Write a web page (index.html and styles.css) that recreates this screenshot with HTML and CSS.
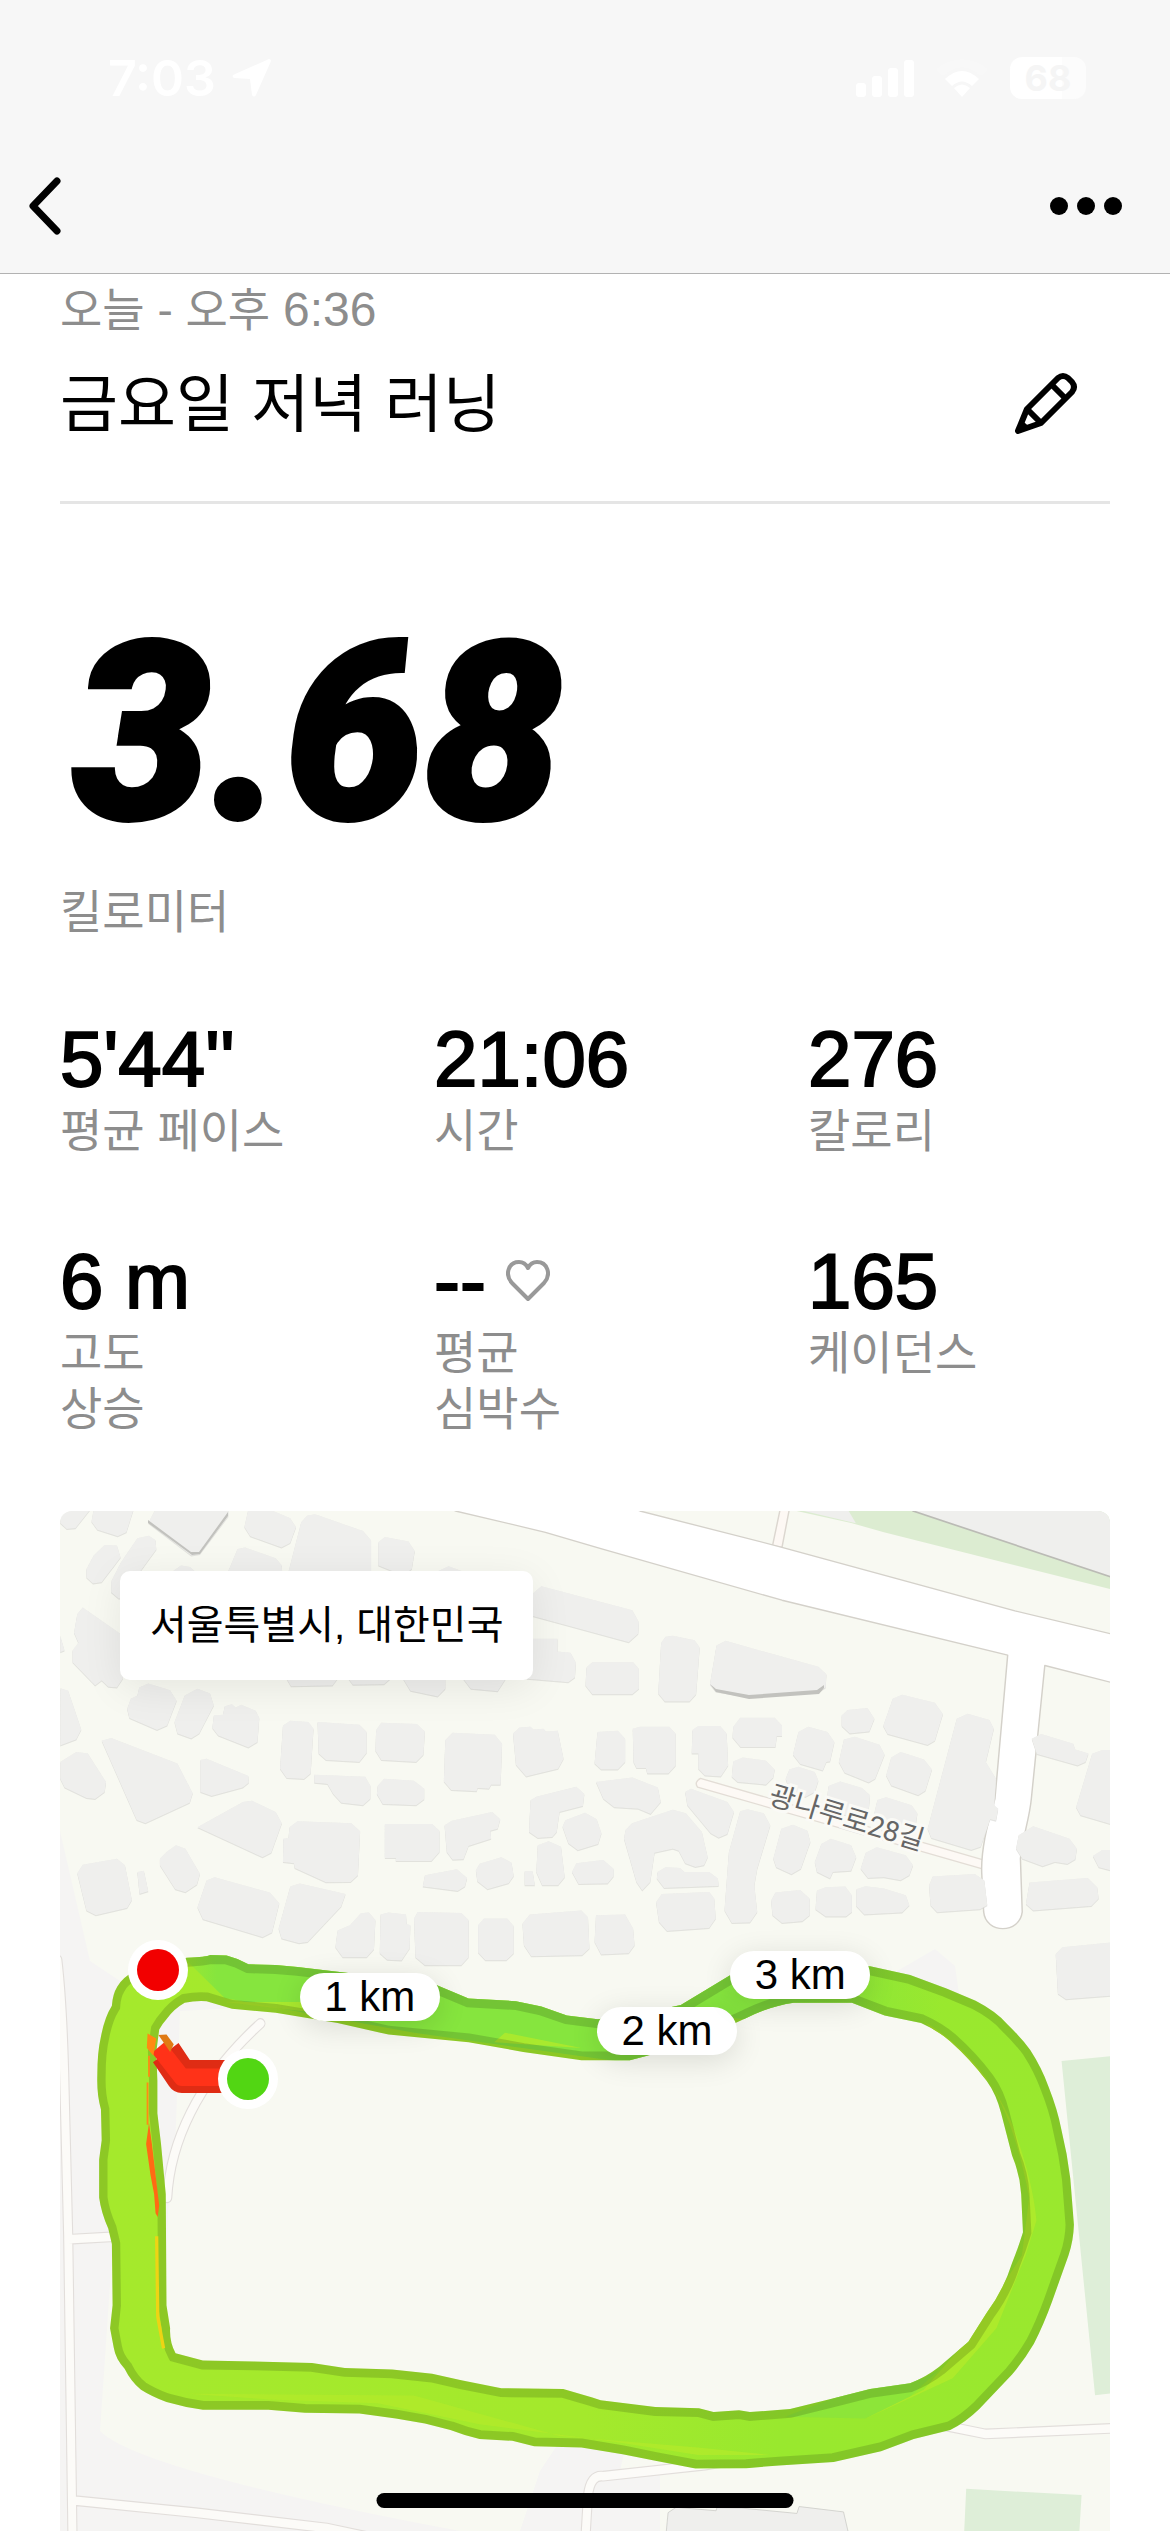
FILE: index.html
```html
<!DOCTYPE html>
<html lang="ko">
<head>
<meta charset="utf-8">
<meta name="viewport" content="width=device-width, initial-scale=1">
<title>금요일 저녁 러닝</title>
<link rel="stylesheet" href="styles.css">
</head>
<body>
<header class="topbar">
  <div class="status">
    <div class="status-left">
      <span class="clock">7:03</span>
      <svg class="location-arrow" viewBox="0 0 40 40" aria-hidden="true"><path d="M37 1 1 17Q0 19 2 20L18 21 20 37Q22 40 24 37L39 3Q39 1 37 1Z"/></svg>
    </div>
    <div class="status-right">
      <svg class="signal" viewBox="0 0 58 38" aria-hidden="true"><rect x="0" y="24" width="10" height="14" rx="3"/><rect x="16" y="17" width="10" height="21" rx="3"/><rect x="32" y="9" width="10" height="29" rx="3"/><rect x="48" y="1" width="10" height="37" rx="3"/></svg>
      <svg class="wifi" viewBox="0 0 52 38" aria-hidden="true"><path opacity=".15" d="M0 10Q26-10 52 10L45 17Q26 0 7 17Z"/><path d="M9 20Q26 4 43 20L36 27Q26 18 16 27Z"/><path d="M18 29Q26 22 34 29L26 38Z"/></svg>
      <span class="battery">68</span>
    </div>
  </div>
  <nav class="nav">
    <button class="icon-button" type="button" aria-label="뒤로"><svg width="36" height="64" viewBox="0 0 36 64" fill="none" stroke="#000" stroke-width="7" stroke-linecap="round" stroke-linejoin="round"><path d="M32 7 8 32l24 25"/></svg></button>
    <button class="icon-button" type="button" aria-label="더 보기"><svg width="74" height="20" viewBox="0 0 74 20"><circle cx="10" cy="10" r="9"/><circle cx="37" cy="10" r="9"/><circle cx="64" cy="10" r="9"/></svg></button>
  </nav>
</header>

<main class="content">
  <p class="date">오늘 - 오후 <time>6:36</time></p>
  <div class="title-row">
    <h1 class="title">금요일 저녁 러닝</h1>
    <button class="icon-button" type="button" aria-label="이름 편집"><svg width="64" height="64" viewBox="0 0 64 64" fill="none" stroke="#000" stroke-width="6" stroke-linejoin="round"><path d="M4 59 13 37 44 6Q49 2 54 6L58 10Q62 15 58 20L27 51Z"/><path d="M37 12 53 28M13 37 27 51M4 59l7-8"/></svg></button>
  </div>

  <p class="distance">3.68</p>
  <p class="label">킬로미터</p>

  <dl class="stats">
    <div class="stat"><dd class="value">5'44''</dd><dt class="label">평균 페이스</dt></div>
    <div class="stat"><dd class="value">21:06</dd><dt class="label">시간</dt></div>
    <div class="stat"><dd class="value">276</dd><dt class="label">칼로리</dt></div>
    <div class="stat"><dd class="value">6 m</dd><dt class="label">고도<br>상승</dt></div>
    <div class="stat"><dd class="value">--<svg class="heart" viewBox="0 0 44 42" aria-hidden="true"><path d="M22 39 6 23C-2 14 3 2 13 2 18 2 21 6 22 8 23 6 26 2 31 2 41 2 46 14 38 23Z"/></svg></dd><dt class="label">평균<br>심박수</dt></div>
    <div class="stat"><dd class="value">165</dd><dt class="label">케이던스</dt></div>
  </dl>

  <section class="map" aria-label="러닝 경로">
    <svg class="map-canvas" viewBox="0 0 1050 1020" aria-hidden="true">
      <defs>
        <linearGradient id="pace" x1="0" x2="1" y1="0" y2="0"><stop offset="0" stop-color="#a5e92c"/><stop offset=".5" stop-color="#a4e92c"/><stop offset=".7" stop-color="#99e82e"/><stop offset="1" stop-color="#9ae82e"/></linearGradient>
        <linearGradient id="fast" x1="0" x2="1" y1="0" y2="0"><stop offset="0" stop-color="#86e53e" stop-opacity="0"/><stop offset=".06" stop-color="#86e53e"/><stop offset=".8" stop-color="#86e53e"/><stop offset="1" stop-color="#86e53e" stop-opacity="0"/></linearGradient>
        <path id="track" d="M300 105 375 75 Q430 73 440 68L485 69 515 78 545 92 620 94 680 99 825 115 940 130 1060 145 1150 181 1280 188 1350 202 1420 225 1505 235 1600 222 1698 205 1733 198 1873 118 2000 95 2253 97 2363 120 2463 155 2543 187Q2600 215 2630 248 2670 285 2693 315 2725 362 2743 410 2768 470 2778 520 2795 585 2803 650L2813 770Q2812 810 2798 850L2753 970Q2730 1030 2703 1080 2675 1125 2643 1160L2553 1250Q2515 1285 2473 1305L2373 1328 2283 1360 2153 1388 2003 1397 1913 1404 1773 1405 1663 1385 1573 1368 1460 1350 1330 1347 1270 1333 1180 1328Q1140 1320 1100 1305L1030 1288 950 1275 850 1262 700 1260 600 1252H420Q370 1246 320 1232 280 1218 250 1200 222 1178 205 1145 180 1120 175 1090L165 1040 172 980 170 820 160 780Q141 740 135 700V600L142 550 140 470Q128 430 130 380 130 320 140 280 150 230 170 200 172 170 185 150 200 125 230 112ZM300 262Q310 245 320 235 340 208 370 192 400 186 430 188L500 208 620 218 790 245 930 275 1150 295 1300 320 1460 342H1593L1680 320 1883 245 1913 232Q1980 200 2043 192H2203L2293 225 2393 245Q2440 265 2473 292 2530 340 2573 395 2600 430 2613 480L2643 590Q2665 640 2668 690L2673 790Q2660 830 2643 870 2620 940 2573 1000L2523 1075 2443 1140Q2405 1168 2363 1183L2253 1198 2153 1222 2033 1250 1923 1258 1893 1253 1823 1258 1783 1248 1663 1245 1513 1227 1490 1220 1410 1198 1240 1196 1130 1175 1050 1158 940 1147 810 1143 720 1130 560 1126 420 1124 345 1105Q328 1075 330 1040L320 980 318 690 305 560 295 480V395L292 320Z"/>
        <clipPath id="track-clip"><use href="#track" clip-rule="evenodd"/></clipPath>
      </defs>

      <rect width="1050" height="1020" fill="#f8f9f2"/>

      <!-- paved ground beside the lane on the left -->
      <path fill="#f5f4f3" d="M0 320 30 450 60 470 180 450 300 470 310 490 120 500 115 640 108 700 105 800 55 700 40 920Q80 960 400 1020H0ZM500 930 570 915 560 960 480 960ZM480 960H600V1020H460ZM820 470 875 438 895 455 900 490Z"/>

      <!-- boulevard, side roads and the park in the top right -->
      <g transform="matrix(.364 0 0 .333 540 -12)" stroke-linejoin="round">
        <path fill="#dcecd1" d="M540 36 690 72 780 100 1404 271V20H540Z"/>
        <path fill="#efefed" d="M560 36 703 73 680 30Z"/>
        <path fill="#efefed" stroke="#bbbbb5" stroke-width="5" d="M860 36 1420 240V10H860Z"/>
        <path fill="#fdf8f4" stroke="#dcd7d0" stroke-width="4" d="M497 20 474 140 500 145 522 20Z"/>
        <path fill="#fdf9f5" stroke="#e3ddd6" stroke-width="4" d="M276 839 1060 1086 1060 1114 268 865Q258 850 276 839Z"/>
        <path fill="#fff" stroke="#d4d1ca" stroke-width="4" d="M-397 36-150 100 0 148 500 304 1120 469 1085 900C1065 970 1045 1060 1049 1130L1054 1240C1060 1307 1153 1307 1160 1240L1155 1080C1160 1020 1180 960 1185 900L1222 500 1430 558V412L1140 336 500 145 110 36 0-10H-500Z"/>
      </g>

      <!-- buildings, north-west blocks -->
      <g class="buildings" transform="matrix(.364 0 0 .333 -10 -12)">
        <path d="M28 30H112L70 88 46 90 28 72ZM120 30H230L210 100 186 112 130 92 114 68ZM290 30H490V52L412 165 388 170 270 72ZM545 30H600L660 58 676 84 660 132 636 146 550 112 534 84ZM120 170 150 138 184 140 194 176 142 250 118 254 100 236 100 210ZM195 190 240 118 272 110 290 124 292 152 240 230 190 300 168 280 168 248ZM500 190 515 150 536 146 620 178 636 198 640 240H480ZM690 70 706 50 728 46 860 96 882 124V240H650ZM902 130 920 114 985 128 1002 156 994 210 970 230 902 200ZM340 215 360 200 385 204 410 230H330ZM1070 215 1095 202 1140 220H1060ZM1320 290 1350 262 1600 334 1618 370 1616 405 1590 430 1320 350ZM75 345 90 326 200 410V540L184 566 160 564 142 545 124 560 62 490 62 455 78 432 66 402ZM28 568 50 576 86 692 72 722 28 740ZM28 410 40 455 28 460ZM222 600 240 590 245 566 270 554 330 574 348 606 322 680 294 694 218 658 212 630ZM370 590 405 570 440 584 450 620 410 704 388 719 350 704 342 670ZM450 650 475 648 480 622 500 616 510 626 525 618 565 636 575 658 570 730 545 746 462 710 446 688ZM650 540H790L776 560 662 562ZM820 540H935L918 556 832 558ZM970 540H1086V570L1065 593 990 576ZM1135 540H1252L1230 577 1156 570ZM1310 420H1394V458L1430 462 1445 492 1442 536 1424 550 1310 540ZM1490 490H1602L1618 510V570L1600 586H1490L1471 560 1474 505Z"/>
        <path d="M640 680 660 666 710 670 724 690 716 824 698 841 650 838 632 810ZM735 670 850 678 870 700V762L850 790 758 784 738 764ZM910 672 1008 676 1030 698 1026 768 1006 790 910 784 894 756 896 694ZM1106 702 1222 708 1242 735 1238 858 1212 858 1206 870 1175 868 1172 878 1102 874 1082 848 1086 724ZM1290 686 1320 684 1328 692 1356 690 1362 698 1395 696 1411 780 1396 810 1308 833 1280 798 1272 704ZM1504 700 1560 696 1580 720V790L1560 812H1514L1496 794ZM142 726 168 718 350 794 392 884 384 912 262 974 238 964ZM28 790 72 760 104 764 154 850 150 880 124 901 100 898 40 866 28 840ZM413 784 430 780 545 832 546 852 530 866 444 892 413 880ZM726 828 866 834 880 860V900L860 920 800 912 778 886 762 856 726 852ZM918 840 1000 846 1028 870V902L1006 920 914 916 898 886 900 862ZM405 986 530 910 555 906 620 940 637 974 608 1062 584 1076ZM641 1020 655 1018 658 986 680 968 828 974 852 998 846 1130 826 1150 758 1151 672 1108 670 1094 640 1090ZM920 976 1050 976 1070 996V1060L1048 1087H950V1078H920ZM1084 980 1104 966 1215 940 1237 962 1230 990 1210 996 1212 1020 1150 1042 1136 1082 1106 1083 1090 1060ZM1320 905 1336 894 1446 864 1468 886 1464 922 1400 940 1392 1000 1380 1015 1340 1018 1316 1000ZM1416 965 1470 942 1502 962 1515 1004 1506 1036 1450 1055 1424 1034 1408 984ZM1340 1040 1370 1028 1404 1044 1414 1136 1396 1160 1352 1160 1336 1120ZM1446 1094 1520 1084 1548 1110V1134L1532 1155 1452 1156 1434 1120ZM1030 1130 1118 1112 1146 1138 1140 1164 1120 1177 1024 1164ZM1180 1095 1240 1076 1268 1092 1274 1132 1260 1154 1202 1172 1174 1148 1170 1115ZM1304 1118H1326L1332 1160H1304Z"/>
        <path d="M90 1098 184 1080 206 1100 225 1204 212 1228 126 1250 100 1236 75 1124ZM240 1120 258 1116 270 1178 246 1186ZM320 1060 346 1040 372 1050 412 1125 404 1158 372 1181 344 1172 302 1100V1080ZM430 1146 452 1136 604 1182 630 1214 610 1302 584 1316 420 1262 405 1226ZM660 1164 686 1155 812 1186 800 1224 708 1330 684 1334 636 1320 628 1290ZM790 1296 824 1280 854 1244 876 1242 894 1264 890 1352 870 1376H804L784 1346ZM908 1248 930 1242 978 1248 980 1276 990 1280 988 1350 966 1386 926 1384 906 1364ZM1010 1240 1130 1243 1150 1264V1376L1130 1400H1030L1004 1376 1000 1260ZM1192 1260H1256L1274 1282V1364L1254 1385H1196L1176 1362V1280ZM1318 1248 1460 1236 1478 1256 1482 1350 1462 1370 1322 1373 1302 1340 1298 1275ZM1500 1250 1580 1248 1602 1290 1606 1340 1590 1364 1514 1368 1496 1330ZM1500 850 1600 836 1670 866 1678 910 1650 946 1616 930 1550 926 1520 900Z"/>
      </g>

      <!-- buildings, north-east blocks -->
      <g class="buildings" transform="matrix(.364 0 0 .333 540 -12)">
        <path d="M180 414 200 411 260 424 274 446 264 586 246 608H178L160 584 168 432ZM320 440 345 426 600 504 622 526 620 566 600 580 408 594 318 578 302 556ZM90 690 110 684H190L208 704V800L188 824H130L126 808 100 808 92 790ZM254 694 270 682H330L348 704 352 800 332 833 288 830 270 810V764H252ZM385 657H480L500 680V712H486L482 745H386L364 716 366 684ZM545 700 572 684 625 700 644 730 632 788 622 790 612 815 550 796 530 768ZM664 650 680 634 735 628 754 660 740 698 686 704 664 682ZM804 600 830 588 920 612 942 646 920 726 900 739 790 706 778 682ZM670 722 700 714 768 738 782 768 756 840 738 851 672 822 656 790ZM800 776 826 760 890 782 912 812 894 876 874 890 800 860 786 830ZM366 788 392 776 456 786 480 812 476 836 456 858 378 850 362 834ZM520 812 545 804 590 820 600 846 590 880 564 895 520 872 510 840ZM628 862 660 848 720 868 742 890 736 960 618 940ZM762 904 786 896 856 920 872 944 866 990 750 960ZM980 660 1010 645 1070 664 1082 690 1060 790 1088 840 1083 920 1094 930 1088 966 1072 962 1046 1044 1020 1054 910 1018 900 990ZM1186 720 1212 706 1300 735 1306 752 1342 764 1334 790 1312 800 1200 766ZM1352 765 1380 754H1420V982L1320 950 1308 926ZM1150 1010 1190 983 1290 1020 1310 1050 1306 1082 1284 1096 1250 1090 1216 1103 1160 1080 1143 1050ZM1354 1072 1380 1054H1420V1120L1370 1106ZM1180 1152 1340 1138 1366 1166 1370 1200 1350 1222 1190 1236 1170 1216ZM904 1160 914 1134 1030 1126 1056 1146 1064 1220 1044 1232 926 1241 908 1220ZM1252 1366 1270 1346 1420 1330V1490L1280 1502 1258 1486Z"/>
        <path d="M234 880 250 870 350 910 368 940 350 1006 326 1017 304 1004 240 920ZM70 994 88 974 200 933 236 944 280 1000 296 1076 286 1100 262 1105 234 1094 216 1056 200 1050 150 1062 138 1150 116 1176 100 1150 66 1020ZM385 938 405 932 450 944 468 980 432 1110 424 1160 432 1240 412 1272 362 1273 342 1236 354 1060ZM498 990 530 978 570 996 578 1030 552 1110 526 1127 484 1106 476 1080ZM608 1036 634 1020 690 1040 704 1076 690 1116 640 1120 632 1140 596 1120 590 1090ZM730 1062 760 1046 840 1070 860 1100 850 1130 826 1145 780 1136 736 1138 716 1110ZM158 1120 180 1106 220 1108 232 1120 300 1120 324 1140 326 1162 176 1168 156 1140ZM170 1186 300 1180 314 1200 318 1260 300 1288 184 1297 162 1270 154 1210ZM482 1182 550 1174 576 1200V1250L556 1268 500 1273 474 1250 470 1206ZM596 1176 620 1166 674 1164 692 1190V1240L676 1254H620L592 1232ZM704 1172 730 1163 780 1170 840 1190 850 1220 830 1242 726 1248 704 1222Z"/>
      </g>

      <!-- walls of the taller buildings -->
      <g fill="#c2c2be">
        <path d="M88 12 132 44 140 43 168 5V1L139 41H131L88 9Z"/>
        <path d="M650 173 656 181 689 188 759 183 764 177V174L757 179 689 184 656 178Z"/>
      </g>

      <!-- lanes and playing fields around the track -->
      <g transform="matrix(.364 0 0 .384 -10 418)">
        <path class="lane-edge" d="M20 80Q35 200 40 420L50 800 62 1600M50 808 200 800M62 1488 400 1520 760 1560 960 1600M322 700C330 560 400 400 578 246M1470 1600 1478 1475Q1485 1420 1520 1425L1800 1396 2450 1292 2570 1315 2930 1300"/>
        <path class="lane" d="M20 80Q35 200 40 420L50 800 62 1600M50 808 200 800M62 1488 400 1520 760 1560 960 1600M322 700C330 560 400 400 578 246M1470 1600 1478 1475Q1485 1420 1520 1425L1800 1396 2450 1292 2570 1315 2930 1300"/>
        <path fill="#deeed8" d="M2779 344 2930 330V1208L2871 1214ZM2517 1458 2834 1474 2826 1600H2510Z"/>
        <path fill="#efefed" stroke="#c9c9c5" stroke-width="2" d="M1698 1520 1720 1506 1830 1515 1832 1507 1900 1508 2052 1522 2058 1504 2180 1518 2200 1600H1690Z"/>
      </g>

      <text class="street" transform="translate(784 316) rotate(17)" text-anchor="middle">광나루로28길</text>

      <!-- run route, coloured by pace -->
      <g transform="matrix(.364 0 0 .384 -10 418)">
        <use href="#track" fill="url(#pace)" fill-rule="evenodd"/>
        <g clip-path="url(#track-clip)">
          <path fill="url(#fast)" d="M330 40H2450V280L1850 230 1600 350 1000 270 480 180Z"/>
          <path fill="#8ae43c" opacity=".8" d="M2020 1270 2240 1190 2400 1170 2440 1150 2360 1220 2240 1275Z"/>
          <path fill="#b2ea2a" opacity=".8" d="M2400 240Q2560 330 2640 500 2700 650 2710 760L2680 850 2600 1040 2480 1170 2230 1280 2400 1200 2520 1070 2670 850 2690 700Q2650 500 2580 400ZM480 190 700 190 700 215ZM1250 270 1460 310 1220 295ZM380 1210 600 1225 900 1235 1180 1290 1550 1335 1780 1370 1980 1370 1780 1350 1400 1320 1000 1215Z"/>
          <use href="#track" fill="none" stroke="#000" stroke-opacity=".14" stroke-width="46"/>
          <path fill="none" stroke="#ff8a14" stroke-width="5" d="M272 330V385M268 400V510"/>
          <path fill="#ff6a14" d="M272 505 280 560 300 720 296 750 290 740 286 690 276 640 264 560Z"/>
          <path fill="none" stroke="#eed414" stroke-width="9" d="M293 800 296 1010 312 1092"/>
        </g>
        <path fill="none" stroke="#df2c14" stroke-width="86" stroke-linejoin="round" d="M318 322 362 384H500"/>
        <path fill="none" stroke="#ff3218" stroke-width="46" stroke-linejoin="round" d="M298 308 362 386H500"/>
        <path fill="#ff8a12" d="M268 272 292 285 284 330 266 310Z"/>
        <path fill="#e07a14" d="M298 276 320 275 340 300 330 320Z"/>
      </g>
      <g fill="#fff">
        <circle cx="98" cy="459" r="30"/><circle cx="188" cy="568" r="30"/>
        <circle cx="98" cy="459" r="21" fill="#f20000"/><circle cx="188" cy="568" r="21" fill="#52d613"/>
      </g>
    </svg>
    <p class="place">서울특별시, 대한민국</p>
    <span class="pin pin-1">1 km</span>
    <span class="pin pin-2">2 km</span>
    <span class="pin pin-3">3 km</span>
  </section>
</main>
<div class="home-indicator"></div>
</body>
</html>
```
FILE: styles.css
```css
* { box-sizing: border-box; }

body {
  margin: 0;
  background: #fff;
  color: #000;
  font-family: "Liberation Sans", "Noto Sans CJK KR", sans-serif;
}

p, h1, dl, dd, dt { margin: 0; }
svg { display: block; }

/* top bar */
.topbar {
  position: sticky;
  top: 0;
  z-index: 2;
  height: 274px;
  background: #f7f7f7;
  border-bottom: 1px solid #b2b2b2;
}

.status {
  display: flex;
  justify-content: space-between;
  align-items: center;
  height: 156px;
  padding: 0 76px 0 108px;
  color: #fff;
}

.status-left, .status-right { display: flex; align-items: center; }
.status-left { gap: 16px; }
.status-right { gap: 22px; }
.status svg { fill: #fff; }

.clock {
  font-family: Inter, sans-serif;
  font-size: 50px;
  font-weight: 600;
  line-height: 60px;
}

.location-arrow { width: 40px; height: 40px; }
.signal { width: 58px; height: 38px; }
.wifi { width: 52px; height: 38px; }

.battery {
  width: 76px;
  border-radius: 12px;
  margin-right: 8px;
  background: linear-gradient(90deg, #fff 68%, #fcfcfc 68%);
  color: #f5f5f5;
  font-family: Inter, sans-serif;
  font-size: 36px;
  font-weight: 700;
  line-height: 42px;
  text-align: center;
}

.nav {
  display: flex;
  justify-content: space-between;
  align-items: center;
  height: 100px;
  padding: 0 47px 0 25px;
}

.icon-button {
  padding: 0;
  border: 0;
  background: none;
  cursor: pointer;
}

/* summary */
.content { padding: 8px 60px 0; }

.date {
  color: #8d8d8d;
  font-size: 46px;
  line-height: 56px;
}

.date time { font-size: 48px; }

.title-row {
  display: flex;
  justify-content: space-between;
  align-items: center;
  margin-top: 28px;
  padding: 0 32px 59px 0;
  border-bottom: 3px solid #e5e5e5;
}

.title {
  font-size: 63px;
  font-weight: 400;
  line-height: 76px;
}

.distance {
  margin-top: 90px;
  padding-left: 12px;
  font-family: Roboto, sans-serif;
  font-size: 248px;
  font-style: italic;
  font-weight: 900;
  line-height: 280px;
  -webkit-text-stroke: 4px #000;
}

.label {
  color: #8d8d8d;
  font-size: 46px;
  line-height: 56px;
}

.distance + .label { margin-top: 10px; }

.stats {
  display: grid;
  grid-template-columns: repeat(3, 1fr);
  column-gap: 36px;
  row-gap: 78px;
  margin-top: 75px;
  margin-right: -36px;
}

.stat { display: flex; flex-direction: column; }

.value {
  display: flex;
  align-items: center;
  gap: 20px;
  font-size: 78px;
  line-height: 88px;
  -webkit-text-stroke: 2px #000;
}

.heart {
  width: 44px;
  height: 42px;
  fill: none;
  stroke: #999;
  stroke-width: 4;
  stroke-linejoin: round;
}

/* map */
.map {
  position: relative;
  margin-top: 74px;
  overflow: hidden;
  border-radius: 12px 12px 0 0;
}

.map-canvas { width: 100%; height: auto; }

.buildings {
  fill: #efefed;
  filter: drop-shadow(0 2px 0 #d6d6d2);
}

.lane-edge { fill: none; stroke: #e2dedb; stroke-width: 28; stroke-linecap: round; }
.lane { fill: none; stroke: #fcfbf8; stroke-width: 22; stroke-linecap: round; }

.street {
  fill: #666;
  stroke: #fafaf6;
  stroke-width: 6px;
  paint-order: stroke;
  font-family: Roboto, "Noto Sans CJK KR", sans-serif;
  font-size: 28px;
}

.place {
  position: absolute;
  top: 60px;
  left: 60px;
  padding: 0 30px;
  border-radius: 10px;
  background: #fff;
  box-shadow: 0 8px 40px rgba(0, 0, 0, .08);
  font-size: 40px;
  line-height: 109px;
}

.pin {
  position: absolute;
  width: 140px;
  border-radius: 24px;
  background: #fff;
  box-shadow: 0 6px 30px rgba(0, 0, 0, .12);
  font-size: 42px;
  line-height: 48px;
  text-align: center;
  transform: translate(-50%, -50%);
}

.pin-1 { left: 29.5%; top: 47.6%; }
.pin-2 { left: 57.8%; top: 51%; }
.pin-3 { left: 70.5%; top: 45.5%; }

.home-indicator {
  position: fixed;
  bottom: 24px;
  left: 50%;
  z-index: 2;
  width: 417px;
  height: 15px;
  border-radius: 8px;
  background: #000;
  transform: translateX(-50%);
}
```
